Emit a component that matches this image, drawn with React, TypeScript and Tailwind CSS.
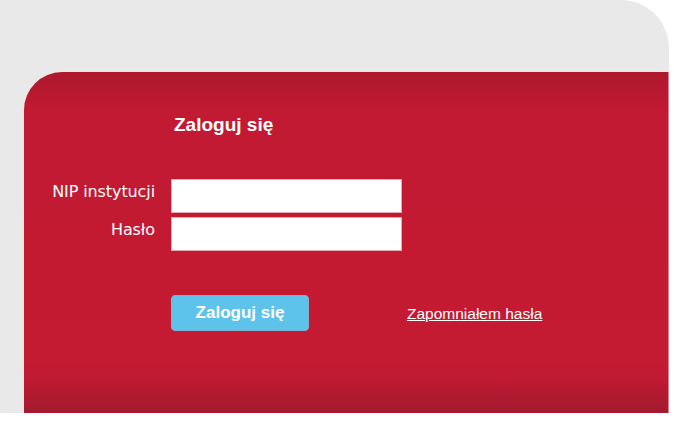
export default function App() {
  return (
    <div className="w-[674px] h-[435px] bg-white">
      <div className="w-[669px] h-[413px] bg-[#e9e9e9] rounded-tr-[48px] pt-[72px] pl-[24px] flex">
        <div
          className="flex-1 rounded-tl-[38px] bg-[linear-gradient(to_bottom,#ad182d_0px,#c21a32_40px,#c41a32_290px,#c01a32_305px,#a31a30_341px)] border-r border-[#d98090] pl-[147px] pt-[42px] flex flex-col"
        >
          <div className="text-white font-bold text-[19px] leading-[22px] ml-[3px] font-['Liberation_Sans',Arial,sans-serif]">
            Zaloguj się
          </div>
          <div className="mt-[43px] flex flex-col gap-[4px] -ml-[147px]">
            <div className="flex items-center">
              <label className="w-[132px] pr-[1px] text-right text-white text-[16px] font-['DejaVu_Sans',Verdana,sans-serif] tracking-[-0.1px] -mt-[9px]">
                NIP instytucji
              </label>
              <input className="ml-[15px] w-[231px] h-[34px] bg-white border border-[#e8a8b0] outline-none" />
            </div>
            <div className="flex items-center">
              <label className="w-[132px] pr-[1px] text-right text-white text-[16px] font-['DejaVu_Sans',Verdana,sans-serif] tracking-[-0.1px] -mt-[9px]">
                Hasło
              </label>
              <input type="password" className="ml-[15px] w-[231px] h-[34px] bg-white border border-[#e8a8b0] outline-none" />
            </div>
          </div>
          <div className="mt-[44px] flex items-center">
            <button className="w-[138px] h-[36px] rounded-[4px] bg-[#5ec3ea] border border-[#7fb0d0] text-white font-bold text-[17px] font-['Liberation_Sans',Arial,sans-serif]">
              Zaloguj się
            </button>
            <a href="#" className="ml-[98px] mt-[1px] text-white underline text-[15.5px] font-['Liberation_Sans',Arial,sans-serif]">
              Zapomniałem hasła
            </a>
          </div>
        </div>
      </div>
    </div>
  );
}
